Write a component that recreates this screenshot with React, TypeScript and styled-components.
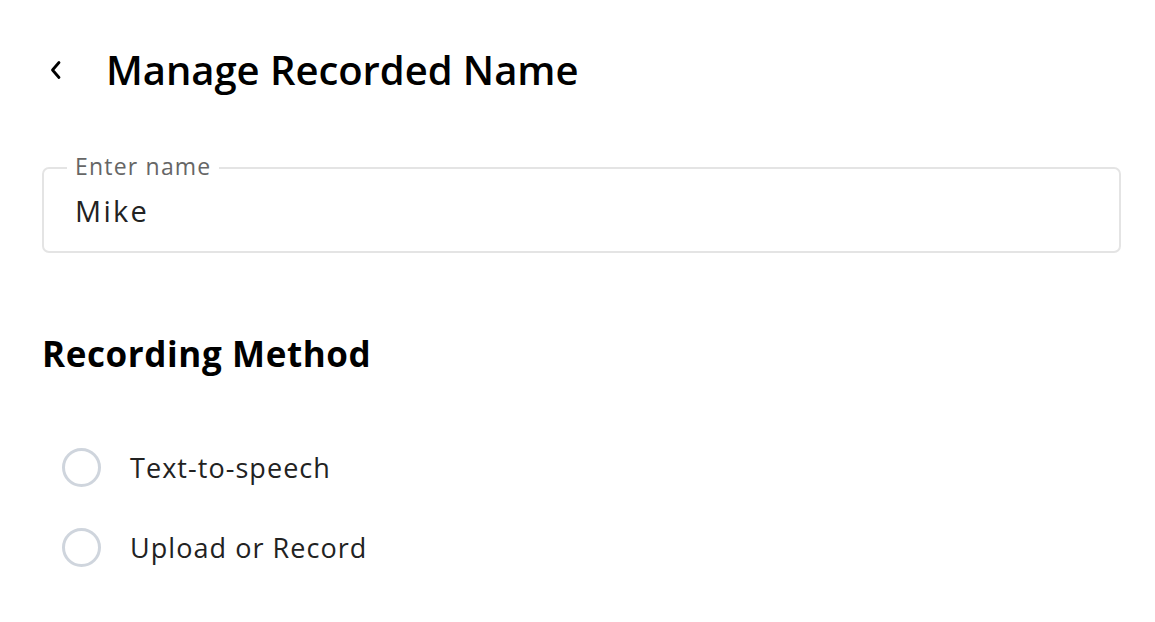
import React from "react";
import styled, { createGlobalStyle } from "styled-components";

const Global = createGlobalStyle`
  html, body { margin: 0; padding: 0; background: #fff; }
  body { font-family: "Open Sans", "Noto Sans", sans-serif; color: #000; }
  * { box-sizing: border-box; }
`;

const Page = styled.div`
  padding: 42px 34px 0 42px;
  display: flex;
  flex-direction: column;
`;

const Header = styled.div`
  display: flex;
  align-items: center;
  gap: 38px;
  height: 56px;
`;

const BackButton = styled.button`
  border: none;
  background: none;
  padding: 0;
  width: 24px;
  height: 24px;
  margin-left: 2px;
  display: flex;
  align-items: center;
  justify-content: center;
  cursor: pointer;
`;

const Title = styled.h1`
  margin: 0;
  font-size: 40px;
  font-weight: 600;
  letter-spacing: -0.05px;
  line-height: 56px;
`;

const Field = styled.div`
  position: relative;
  margin-top: 69px;
  height: 86px;
  padding: 0 31px;
  border: 2px solid #e4e4e4;
  border-radius: 7px;
  display: flex;
  align-items: center;
`;

const FieldLabel = styled.span`
  position: absolute;
  top: -16px;
  left: 23px;
  padding: 0 8px;
  background: #fff;
  font-size: 23px;
  color: #666;
  letter-spacing: 1.2px;
  line-height: 26px;
`;

const Value = styled.div`
  font-size: 29px;
  color: #222;
  letter-spacing: 2.3px;
  line-height: 36px;
  margin-top: 2px;
`;

const SectionTitle = styled.h2`
  margin: 78px 0 0 0;
  font-size: 35px;
  font-weight: 700;
  letter-spacing: 0.6px;
  line-height: 46px;
`;

const RadioList = styled.div`
  display: flex;
  flex-direction: column;
  gap: 40px;
  margin-top: 70px;
  padding-left: 20px;
`;

const RadioRow = styled.label`
  display: flex;
  align-items: center;
  gap: 29px;
  height: 40px;
`;

const Circle = styled.span`
  width: 39px;
  height: 39px;
  border-radius: 50%;
  border: 3px solid #cfd5dd;
  flex: none;
`;

const RadioText = styled.span`
  font-size: 27px;
  color: #222;
  letter-spacing: 1.05px;
`;

export default function App() {
  return (
    <Page>
      <Global />
      <Header>
        <BackButton aria-label="Back">
          <svg width="16" height="22" viewBox="0 0 16 22" fill="none">
            <path d="M11 3.5 L4.5 11 L11 18.5" stroke="#000" strokeWidth="2.8" strokeLinecap="round" strokeLinejoin="round" />
          </svg>
        </BackButton>
        <Title>Manage Recorded Name</Title>
      </Header>
      <Field>
        <FieldLabel>Enter name</FieldLabel>
        <Value>Mike</Value>
      </Field>
      <SectionTitle>Recording Method</SectionTitle>
      <RadioList>
        <RadioRow>
          <Circle />
          <RadioText>Text-to-speech</RadioText>
        </RadioRow>
        <RadioRow>
          <Circle />
          <RadioText>Upload or Record</RadioText>
        </RadioRow>
      </RadioList>
    </Page>
  );
}
